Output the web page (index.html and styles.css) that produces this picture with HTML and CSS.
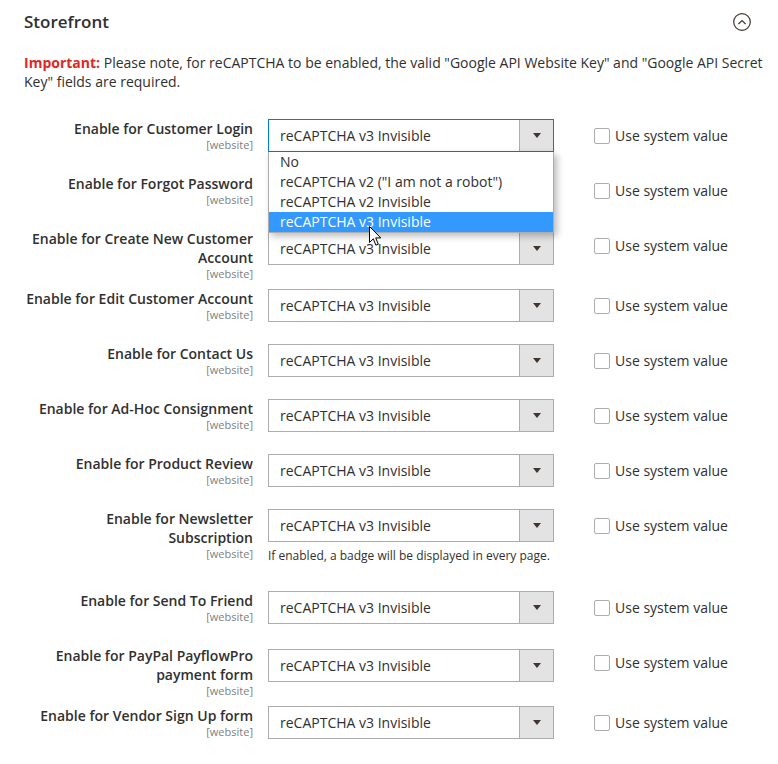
FILE: index.html
```html
<!DOCTYPE html>
<html>

<head>
    <meta charset="utf-8" />
    <title>Storefront</title>
    <link rel="stylesheet" href="styles.css">
</head>

<body>
    <div class="section">
        <!-- section header -->
        <div class="section-head">
            <h2 class="section-title">Storefront</h2>
            <span class="collapse-icon">
                <svg width="18" height="18" viewBox="0 0 18 18">
                    <circle cx="9" cy="9" r="8.3" fill="none" stroke="#41362f" stroke-width="1.2" />
                    <polyline points="5.4,11 9,7.6 12.6,11" fill="none" stroke="#41362f" stroke-width="1.2" />
                </svg>
            </span>
        </div>

        <p class="important-note"><strong>Important:</strong> Please note, for reCAPTCHA to be enabled, the valid "Google API Website Key" and "Google API Secret Key" fields are required.</p>

        <div class="config">
            <div class="config-row">
                <div class="config-label"><span>Enable for Customer Login</span><span class="scope">[website]</span></div>
                <div class="config-value">
                    <div class="select is-open">
                        <span class="select-text">reCAPTCHA v3 Invisible</span>
                        <span class="select-arrow"></span>
                        <!-- opened dropdown -->
                        <ul class="select-options">
                            <li>No</li>
                            <li>reCAPTCHA v2 ("I am not a robot")</li>
                            <li>reCAPTCHA v2 Invisible</li>
                            <li class="selected">reCAPTCHA v3 Invisible</li>
                        </ul>
                        <svg class="cursor" width="13" height="21" viewBox="0 0 13 21">
                            <path d="M0.5 0.5 L0.5 16.5 L4.3 12.8 L6.9 19.2 L9.3 18.2 L6.7 11.9 L11.8 11.9 Z" fill="#fff" stroke="#000" stroke-width="1" stroke-linejoin="round" />
                        </svg>
                    </div>
                </div>
                <label class="use-default"><span class="checkbox"></span>Use system value</label>
            </div>

            <div class="config-row">
                <div class="config-label"><span>Enable for Forgot Password</span><span class="scope">[website]</span></div>
                <div class="config-value">
                    <div class="select"><span class="select-text">reCAPTCHA v3 Invisible</span><span class="select-arrow"></span></div>
                </div>
                <label class="use-default"><span class="checkbox"></span>Use system value</label>
            </div>

            <div class="config-row">
                <div class="config-label"><span>Enable for Create New Customer Account</span><span class="scope">[website]</span></div>
                <div class="config-value">
                    <div class="select"><span class="select-text">reCAPTCHA v3 Invisible</span><span class="select-arrow"></span></div>
                </div>
                <label class="use-default"><span class="checkbox"></span>Use system value</label>
            </div>

            <div class="config-row">
                <div class="config-label"><span>Enable for Edit Customer Account</span><span class="scope">[website]</span></div>
                <div class="config-value">
                    <div class="select"><span class="select-text">reCAPTCHA v3 Invisible</span><span class="select-arrow"></span></div>
                </div>
                <label class="use-default"><span class="checkbox"></span>Use system value</label>
            </div>

            <div class="config-row">
                <div class="config-label"><span>Enable for Contact Us</span><span class="scope">[website]</span></div>
                <div class="config-value">
                    <div class="select"><span class="select-text">reCAPTCHA v3 Invisible</span><span class="select-arrow"></span></div>
                </div>
                <label class="use-default"><span class="checkbox"></span>Use system value</label>
            </div>

            <div class="config-row">
                <div class="config-label"><span>Enable for Ad-Hoc Consignment</span><span class="scope">[website]</span></div>
                <div class="config-value">
                    <div class="select"><span class="select-text">reCAPTCHA v3 Invisible</span><span class="select-arrow"></span></div>
                </div>
                <label class="use-default"><span class="checkbox"></span>Use system value</label>
            </div>

            <div class="config-row">
                <div class="config-label"><span>Enable for Product Review</span><span class="scope">[website]</span></div>
                <div class="config-value">
                    <div class="select"><span class="select-text">reCAPTCHA v3 Invisible</span><span class="select-arrow"></span></div>
                </div>
                <label class="use-default"><span class="checkbox"></span>Use system value</label>
            </div>

            <div class="config-row">
                <div class="config-label"><span>Enable for Newsletter Subscription</span><span class="scope">[website]</span></div>
                <div class="config-value">
                    <div class="select"><span class="select-text">reCAPTCHA v3 Invisible</span><span class="select-arrow"></span></div>
                    <p class="note">If enabled, a badge will be displayed in every page.</p>
                </div>
                <label class="use-default"><span class="checkbox"></span>Use system value</label>
            </div>

            <div class="config-row">
                <div class="config-label"><span>Enable for Send To Friend</span><span class="scope">[website]</span></div>
                <div class="config-value">
                    <div class="select"><span class="select-text">reCAPTCHA v3 Invisible</span><span class="select-arrow"></span></div>
                </div>
                <label class="use-default"><span class="checkbox"></span>Use system value</label>
            </div>

            <div class="config-row">
                <div class="config-label"><span>Enable for PayPal PayflowPro payment form</span><span class="scope">[website]</span></div>
                <div class="config-value">
                    <div class="select"><span class="select-text">reCAPTCHA v3 Invisible</span><span class="select-arrow"></span></div>
                </div>
                <label class="use-default"><span class="checkbox"></span>Use system value</label>
            </div>

            <div class="config-row">
                <div class="config-label"><span>Enable for Vendor Sign Up form</span><span class="scope">[website]</span></div>
                <div class="config-value">
                    <div class="select"><span class="select-text">reCAPTCHA v3 Invisible</span><span class="select-arrow"></span></div>
                </div>
                <label class="use-default"><span class="checkbox"></span>Use system value</label>
            </div>
        </div>
    </div>
</body>

</html>
```

FILE: styles.css
```css
body {
    margin: 0;
    background: #fff;
    color: #303030;
    font-family: "Open Sans", "Liberation Sans", sans-serif;
    font-size: 14px;
    line-height: 19px;
}

.section {
    padding: 10px 10px 0 24px;
}

.section-head {
    display: flex;
    align-items: center;
    justify-content: space-between;
    height: 23px;
}

.section-title {
    margin: 0;
    font-size: 17px;
    font-weight: 600;
    line-height: 23px;
    color: #303030;
}

.collapse-icon {
    display: flex;
    margin-right: 17px;
}

.important-note {
    margin: 20px 0 28px;
}

.important-note strong {
    color: #e22626;
    font-weight: 700;
}

.config-row {
    display: flex;
    align-items: flex-start;
    margin-bottom: 22px;
}

.config-label {
    width: 229px;
    margin-right: 15px;
    text-align: right;
    font-weight: 600;
}

.config-label span {
    display: block;
}

.config-label .scope {
    margin-bottom: -13px;
    font-size: 11px;
    font-weight: 400;
    line-height: 13px;
    color: #808080;
}

.config-value {
    align-self: center;
    width: 286px;
}

.select {
    position: relative;
    display: flex;
    box-sizing: border-box;
    height: 33px;
    border: 1px solid #adadad;
    background: #fff;
}

.select.is-open {
    border-color: #007bdb;
}

.select-text {
    flex: 1;
    padding-left: 11px;
    line-height: 31px;
}

.select-arrow {
    display: flex;
    align-items: center;
    justify-content: center;
    width: 33px;
    border-left: 1px solid #adadad;
    background: #e3e3e3;
}

.select-arrow::after {
    content: "";
    border-left: 4px solid transparent;
    border-right: 4px solid transparent;
    border-top: 5px solid #41362f;
}

.select-options {
    position: absolute;
    top: calc(100% + 1px);
    left: -1px;
    z-index: 5;
    width: calc(100% + 2px);
    box-sizing: border-box;
    margin: 0;
    padding: 0;
    list-style: none;
    border: 1px solid #adadad;
    border-top: 0;
    background: #fff;
    box-shadow: 3px 3px 7px rgba(0, 0, 0, 0.28);
}

.select-options li {
    padding: 0 11px;
    line-height: 20px;
}

.select-options li.selected {
    background: #3399ff;
    color: #fff;
}

.cursor {
    position: absolute;
    left: 100px;
    top: 106px;
    z-index: 6;
}

.note {
    margin: 6px 0 5px;
    font-size: 12px;
    line-height: 16px;
}

.use-default {
    display: flex;
    align-items: center;
    height: 33px;
    margin-left: 40px;
}

.checkbox {
    box-sizing: border-box;
    width: 16px;
    height: 16px;
    margin-right: 5px;
    border: 1px solid #adadad;
    border-radius: 2px;
    background: #fff;
}
```
